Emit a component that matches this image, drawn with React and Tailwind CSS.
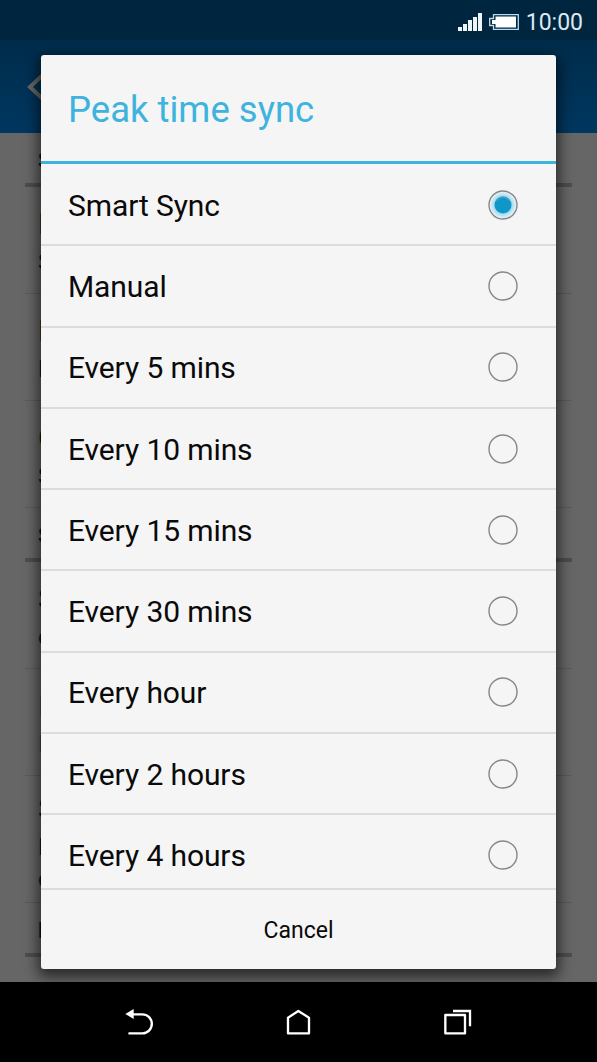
const OPTIONS = [
  "Smart Sync",
  "Manual",
  "Every 5 mins",
  "Every 10 mins",
  "Every 15 mins",
  "Every 30 mins",
  "Every hour",
  "Every 2 hours",
  "Every 4 hours",
];

// Settings list underneath the dialog, only the row initials stick out
const SECTIONS = [
  { header: "S", className: "h-[54px] pt-[11px]" },
  { lines: ["P", "S"], className: "h-[107px] pt-[17px]" },
  { lines: ["P", "P"], className: "h-[107px] pt-[17px]" },
  { lines: ["C", "S"], className: "h-[107px] pt-[17px]" },
  { header: "S", className: "h-[54px] pt-[11px]" },
  { lines: ["S", "c"], className: "h-[107px] pt-[17px]" },
  { lines: ["P", "P"], className: "h-[107px] pt-[17px]", disabled: true },
  { lines: ["S", "P", "c"], className: "h-[127px] pt-[13px]" },
  { header: "P", className: "h-[54px] pt-[11px]" },
  { lines: ["Notice exit"], className: "h-[107px] pt-[16px]" },
];

function StatusBar() {
  return (
    <div className="h-10 shrink-0 bg-[#00263f] flex items-center justify-end pr-[14px] pt-[3px]">
      <svg width="24" height="20" viewBox="0 0 24 20" fill="#eef5fa">
        <rect x="0" y="15" width="4" height="4" />
        <rect x="5" y="12" width="4" height="7" />
        <rect x="10" y="8" width="4" height="11" />
        <rect x="15" y="5" width="4" height="14" />
        <rect x="20" y="1" width="4" height="18" />
      </svg>
      <svg className="ml-[7px]" width="30" height="16" viewBox="0 0 30 16">
        <path
          d="M4.5.7H29.3V15.3H4.5V11.5H.7V4.5H4.5Z"
          fill="none"
          stroke="#b5dcf0"
          strokeWidth="1.3"
        />
        <path d="M6.5 2.5H27V13.5H6.5V10H3V6H6.5Z" fill="#fff" />
      </svg>
      <span className="ml-[7px] pt-px text-[23px] leading-none text-[#dce9f2]">10:00</span>
    </div>
  );
}

function SettingsList() {
  return (
    <div className="flex-1 min-h-0 overflow-hidden bg-[#666] px-[25px]">
      {SECTIONS.map((row, i) =>
        row.header ? (
          <div
            key={i}
            className={`${row.className} border-b-4 border-[#4d4d4d] pl-[13px] text-[22px] font-bold text-[#111]`}
          >
            {row.header}
          </div>
        ) : (
          <div
            key={i}
            className={`${row.className} border-b border-[#595959] pl-[13px] ${
              row.disabled ? "text-[#444]" : "text-[#111]"
            }`}
          >
            <div className="text-[30px] leading-[40px]">{row.lines[0]}</div>
            {row.lines[1] && <div className="text-[24px] leading-[36px]">{row.lines[1]}</div>}
            {row.lines[2] && <div className="text-[24px] leading-[29px]">{row.lines[2]}</div>}
          </div>
        )
      )}
    </div>
  );
}

function Radio({ checked }) {
  return (
    <svg width="32" height="32" viewBox="0 0 32 32">
      <defs>
        <radialGradient id="glow">
          <stop offset="0.6" stopColor="#9fd9ef" />
          <stop offset="0.95" stopColor="#e8f2f6" />
        </radialGradient>
      </defs>
      <circle
        cx="16"
        cy="16"
        r="14"
        fill={checked ? "url(#glow)" : "none"}
        stroke="#878787"
        strokeWidth="1.4"
      />
      {checked && (
        <>
          <circle cx="16" cy="16" r="8.5" fill="#0d98c9" />
          <path d="M9.5 11.5A8 8 0 0 1 22.5 11.5" fill="none" stroke="#5b9fb8" strokeWidth="1.3" />
        </>
      )}
    </svg>
  );
}

function SyncDialog() {
  return (
    <div className="w-[515px] h-[914px] flex flex-col bg-[#f5f5f5] rounded-[3px] overflow-hidden shadow-[0_5px_14px_3px_rgba(0,0,0,0.6)]">
      <div className="h-[109px] shrink-0 flex items-center pl-[27px] pt-[4px] border-b-[3px] border-[#3db3de] text-[36.5px] text-[#3db3de]">
        Peak time sync
      </div>
      <div className="flex-1 min-h-0 overflow-hidden pt-px">
        {OPTIONS.map((option, i) => (
          <div
            key={option}
            className="h-[81.3px] flex items-center justify-between pl-[27px] pr-[37px] border-b-2 border-[#dcdcdc] text-[30px] tracking-[-0.1px] text-[#0a0a0a]"
          >
            <span className="pt-px">{option}</span>
            <Radio checked={i === 0} />
          </div>
        ))}
      </div>
      <button className="h-[81px] shrink-0 border-t-2 border-[#dcdcdc] pt-[4px] text-[23px] text-[#0a0a0a]">
        Cancel
      </button>
    </div>
  );
}

function NavBar() {
  return (
    <div className="h-20 shrink-0 bg-black flex items-end justify-center pl-[3px]">
      <svg width="400" height="72" viewBox="0 0 1200 216" fill="none" stroke="#fff" strokeWidth="7">
        <path d="M96 73H127A28 28 0 0 1 127 130H88" strokeLinecap="round" />
        <path d="M76 72L101 57V87Z" fill="#fff" stroke="none" />
        <path d="M564 130V83L595 63L627 83V130Z" strokeLinejoin="round" />
        <rect x="1036" y="75" width="59" height="55" strokeLinejoin="round" />
        <path d="M1059 63H1110V109" />
      </svg>
    </div>
  );
}

export default function App() {
  return (
    <div className="relative w-[597px] h-[1062px] flex flex-col overflow-hidden font-[Roboto,sans-serif]">
      <StatusBar />
      <div className="h-[93px] shrink-0 bg-linear-to-b from-[#002c4b] to-[#003760] flex items-center pl-[25px]">
        <svg width="24" height="34" viewBox="0 0 24 34" fill="none" stroke="#666" strokeWidth="4">
          <path d="M20 3L5 17L20 31" />
        </svg>
      </div>
      <SettingsList />
      <div className="absolute left-[41px] top-[55px]">
        <SyncDialog />
      </div>
      <NavBar />
    </div>
  );
}
